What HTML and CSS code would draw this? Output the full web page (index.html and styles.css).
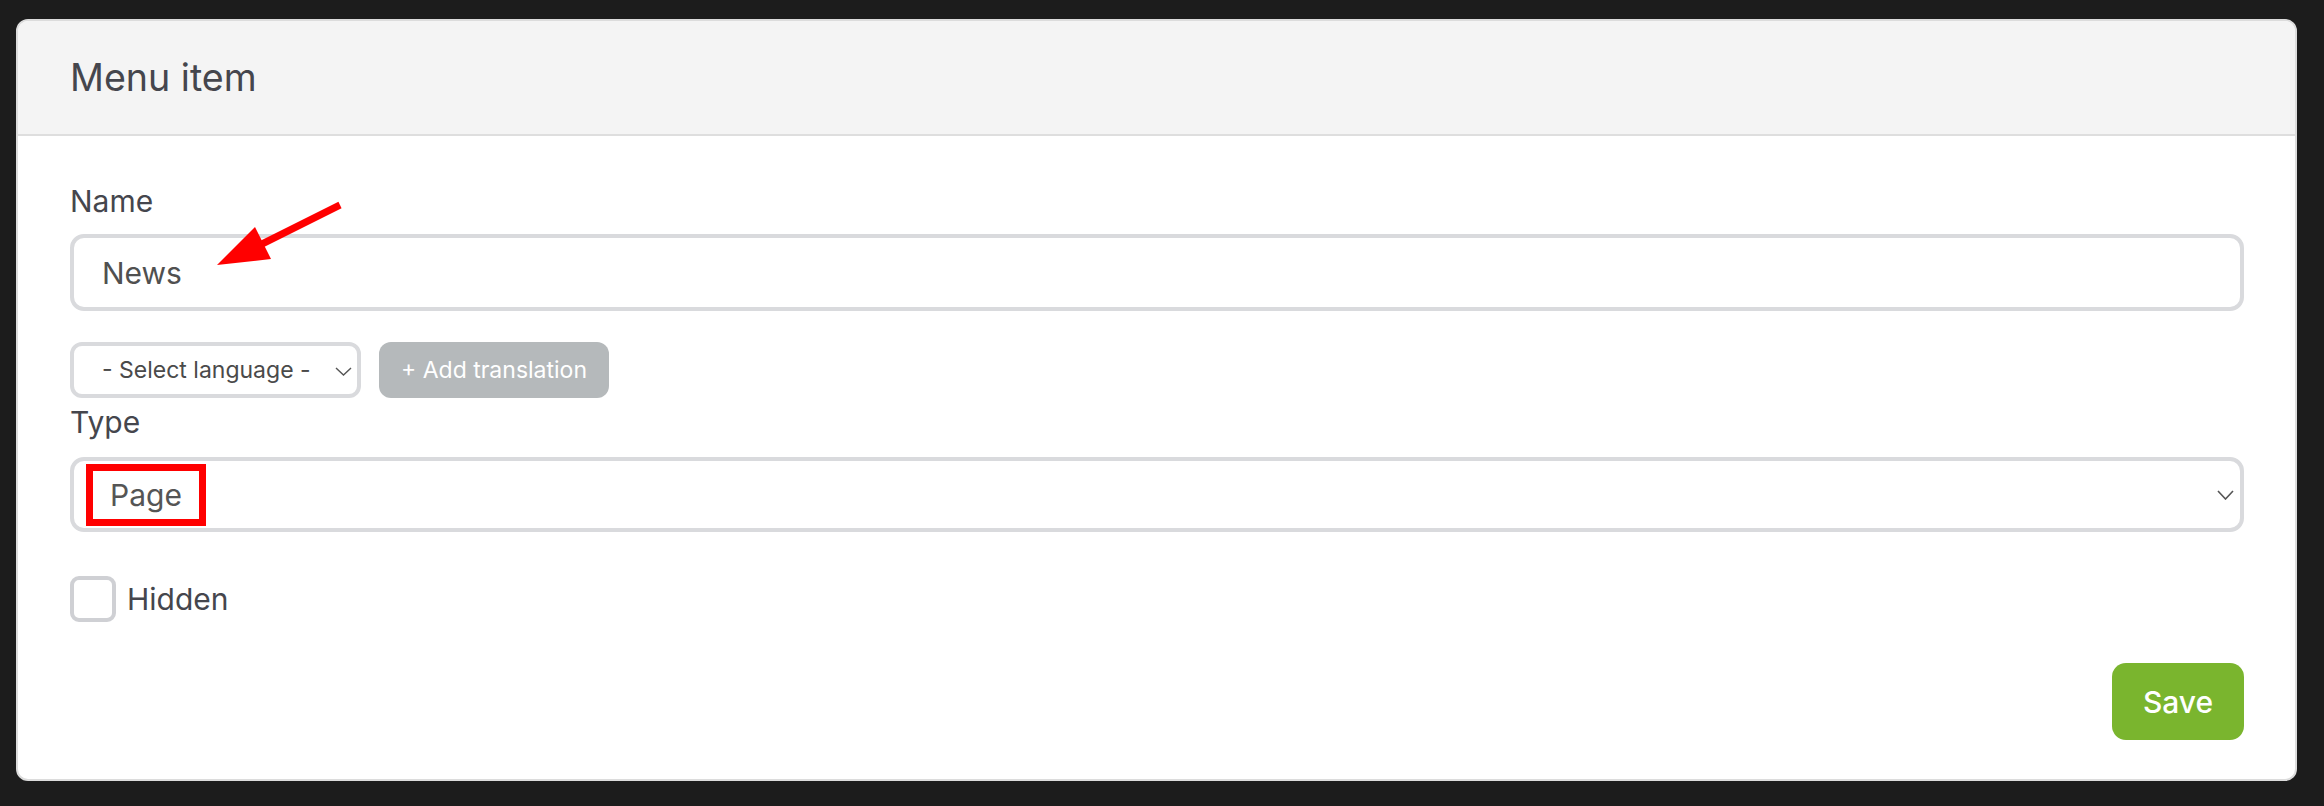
FILE: index.html
```html
<!DOCTYPE html>
<html lang="en">
<head>
<meta charset="utf-8">
<title>Menu item</title>
<link rel="stylesheet" href="styles.css">
</head>
<body>
<div class="card">
  <div class="card-header">
    <h1 class="card-title">Menu item</h1>
  </div>
  <div class="card-body">
    <label class="field-label">Name</label>
    <input class="text-input" type="text" value="News">

    <div class="lang-row">
      <div class="lang-select">
        <span>- Select language -</span>
        <svg class="chev-small" width="17" height="9" viewBox="0 0 17 9"><path d="M1 1 L8.5 8 L16 1" fill="none" stroke="#555" stroke-width="1.4"/></svg>
      </div>
      <button class="btn-translate">+ Add translation</button>
    </div>

    <label class="field-label type-label">Type</label>
    <div class="select">
      <span class="annot-box">Page</span>
      <svg class="chev" width="17" height="10" viewBox="0 0 17 10"><path d="M1 1 L8.5 9 L16 1" fill="none" stroke="#555" stroke-width="1.6"/></svg>
    </div>

    <div class="check-row">
      <span class="checkbox"></span>
      <span class="check-label">Hidden</span>
    </div>

    <div class="actions">
      <button class="btn-save">Save</button>
    </div>
  </div>
</div>

<svg class="annot-arrow" width="140" height="80" viewBox="210 195 140 80">
  <line x1="340" y1="205" x2="260" y2="245" stroke="#ff0000" stroke-width="7"/>
  <polygon points="217,265 255,227 271,259" fill="#ff0000"/>
</svg>
</body>
</html>
```

FILE: styles.css
```css
* {
  box-sizing: border-box;
}

body {
  margin: 0;
  background: #1c1c1c;
  font-family: Inter, "Noto Sans", sans-serif;
}

.card {
  margin: 19px 27px 0 16px;
  background: #ffffff;
  border: 2px solid #dcdcdc;
  border-radius: 12px;
  overflow: hidden;
}

.card-header {
  height: 115px;
  background: #f4f4f4;
  border-bottom: 2px solid #dedede;
  display: flex;
  align-items: center;
  padding: 0 51px 0 52px;
}

.card-title {
  margin: 0;
  font-size: 37.6px;
  font-weight: 400;
  color: #45464d;
}

.card-body {
  padding: 44px 51px 39px 52px;
}

.field-label {
  display: block;
  font-size: 30px;
  line-height: 43px;
  color: #45464d;
  margin-bottom: 11px;
}

.type-label {
  margin-top: 3px;
  margin-bottom: 13px;
}

.text-input {
  display: block;
  width: 100%;
  height: 77px;
  border: 4px solid #d9dadd;
  border-radius: 14px;
  padding: 0 28px;
  font-family: Inter, "Noto Sans", sans-serif;
  font-size: 30px;
  color: #505050;
  background: #fff;
  outline: none;
}

.lang-row {
  display: flex;
  gap: 18px;
  margin-top: 31px;
  height: 56px;
}

.lang-select {
  width: 291px;
  border: 4px solid #d9dadd;
  border-radius: 12px;
  display: flex;
  align-items: center;
  justify-content: space-between;
  padding: 0 5px 0 28px;
  font-size: 23px;
  color: #4a4a4a;
}

.chev-small {
  margin-top: 2px;
}

.btn-translate {
  width: 230px;
  background: #b5b9bb;
  color: #ffffff;
  border: none;
  border-radius: 12px;
  font-family: Inter, "Noto Sans", sans-serif;
  font-size: 23px;
  padding: 0;
}

.select {
  height: 75px;
  border: 4px solid #d9dadd;
  border-radius: 14px;
  display: flex;
  align-items: center;
  padding: 0 6px 0 12px;
}

.annot-box {
  height: 62px;
  border: 7px solid #ff0000;
  padding: 0 17px;
  display: flex;
  align-items: center;
  font-size: 30px;
  color: #555555;
}

.chev {
  margin-left: auto;
}

.check-row {
  display: flex;
  align-items: center;
  gap: 11px;
  margin-top: 44px;
}

.checkbox {
  width: 46px;
  height: 46px;
  border: 4px solid #cfd0d4;
  border-radius: 9px;
  background: #fff;
}

.check-label {
  font-size: 30px;
  line-height: 43px;
  color: #45464d;
}

.actions {
  display: flex;
  justify-content: flex-end;
  margin-top: 41px;
}

.btn-save {
  width: 132px;
  height: 77px;
  background: #7ab52e;
  color: #ffffff;
  border: none;
  border-radius: 14px;
  font-family: Inter, "Noto Sans", sans-serif;
  font-size: 30px;
  font-weight: 500;
  padding: 0;
}

.annot-arrow {
  position: absolute;
  left: 210px;
  top: 195px;
  pointer-events: none;
}
```
